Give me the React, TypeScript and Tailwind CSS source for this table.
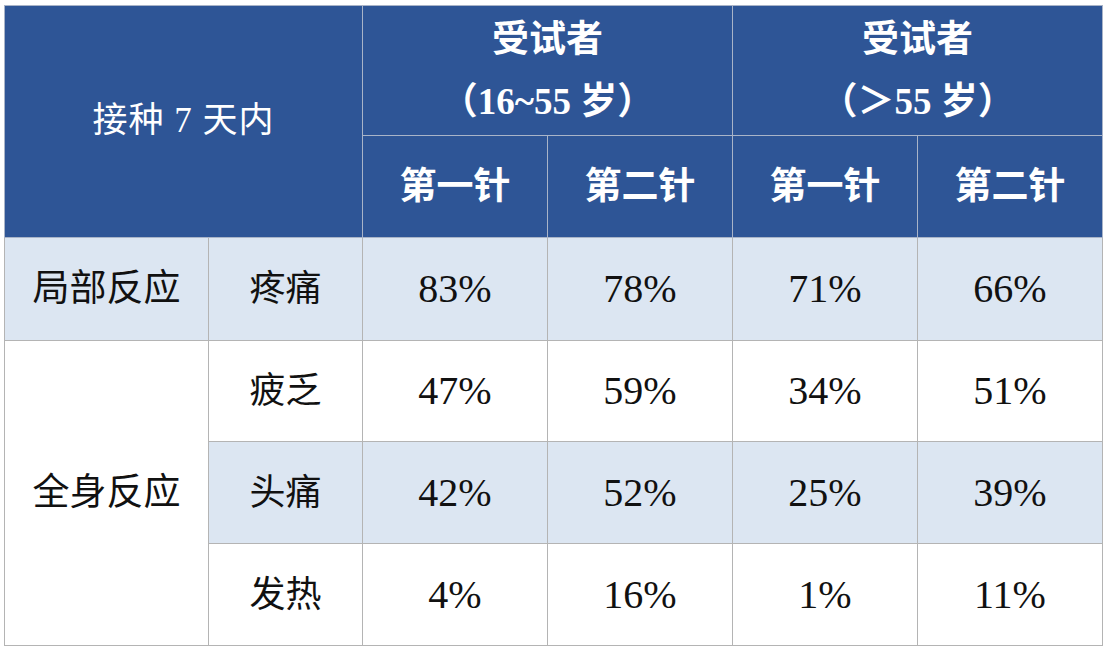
const headBlue = 'bg-[#2e5596]';

const rows = [
  { group: '局部反应', span: 1, name: '疼痛', vals: ['83%', '78%', '71%', '66%'], light: true, h: 'h-[103px]' },
  { group: '全身反应', span: 3, name: '疲乏', vals: ['47%', '59%', '34%', '51%'], light: false, h: 'h-[101px]' },
  { group: null, span: 0, name: '头痛', vals: ['42%', '52%', '25%', '39%'], light: true, h: 'h-[102px]' },
  { group: null, span: 0, name: '发热', vals: ['4%', '16%', '1%', '11%'], light: false, h: 'h-[102px]' },
];

export default function App() {
  return (
    <div
      className="w-[1106px] h-[648px] bg-white pt-[5px] pl-[4px]"
      style={{ fontFamily: '"Liberation Serif", "Noto Sans CJK SC", serif' }}
    >
      <table className="w-[1098px] border-collapse table-fixed text-center">
        <colgroup>
          <col className="w-[204px]" />
          <col className="w-[154px]" />
          <col className="w-[185px]" />
          <col className="w-[185px]" />
          <col className="w-[185px]" />
          <col className="w-[185px]" />
        </colgroup>
        <thead>
          <tr className="h-[130px]">
            <th
              colSpan={2}
              rowSpan={2}
              className={`${headBlue} text-white text-[35px] font-normal border border-[#a9b4c8] tracking-[1px]`}
            >
              接种 7 天内
            </th>
            <th colSpan={2} className={`${headBlue} text-white text-[37px] font-bold leading-[62px] border border-[#a9b4c8]`}>
              <div>受试者</div>
              <div>（16~55 岁）</div>
            </th>
            <th colSpan={2} className={`${headBlue} text-white text-[37px] font-bold leading-[62px] border border-[#a9b4c8]`}>
              <div>受试者</div>
              <div>（＞55 岁）</div>
            </th>
          </tr>
          <tr className="h-[102px]">
            {['第一针', '第二针', '第一针', '第二针'].map((t, i) => (
              <th key={i} className={`${headBlue} text-white text-[37px] font-semibold border border-[#a9b4c8]`}>
                {t}
              </th>
            ))}
          </tr>
        </thead>
        <tbody>
          {rows.map((r, i) => (
            <tr key={i} className={r.h}>
              {r.group && (
                <td
                  rowSpan={r.span}
                  className={`${r.light ? 'bg-[#dce6f2]' : 'bg-white'} text-[#111] text-[37px] border border-[#b4b4b4]`}
                >
                  {r.group}
                </td>
              )}
              <td className={`${r.light ? 'bg-[#dce6f2]' : 'bg-white'} text-[#111] text-[36px] border border-[#b4b4b4]`}>
                {r.name}
              </td>
              {r.vals.map((v, j) => (
                <td
                  key={j}
                  className={`${r.light ? 'bg-[#dce6f2]' : 'bg-white'} text-[#111] text-[40px] border border-[#b4b4b4]`}
                >
                  {v}
                </td>
              ))}
            </tr>
          ))}
        </tbody>
      </table>
    </div>
  );
}
